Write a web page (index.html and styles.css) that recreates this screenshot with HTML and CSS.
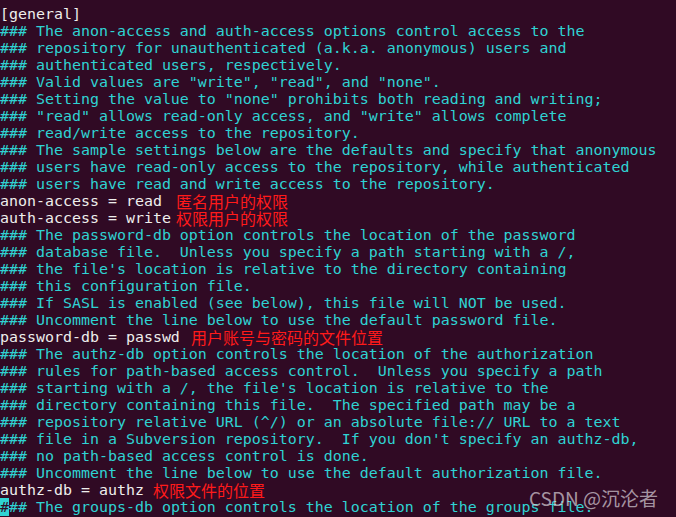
FILE: index.html
```html
<!DOCTYPE html>
<html lang="zh-CN">
<head>
<meta charset="utf-8">
<title>svnserve.conf</title>
<link rel="stylesheet" href="styles.css">
</head>
<body>
<main class="terminal">
<div class="line plain">[general]</div>
<div class="line cm">### The anon-access and auth-access options control access to the</div>
<div class="line cm">### repository for unauthenticated (a.k.a. anonymous) users and</div>
<div class="line cm">### authenticated users, respectively.</div>
<div class="line cm">### Valid values are "write", "read", and "none".</div>
<div class="line cm">### Setting the value to "none" prohibits both reading and writing;</div>
<div class="line cm">### "read" allows read-only access, and "write" allows complete</div>
<div class="line cm">### read/write access to the repository.</div>
<div class="line cm">### The sample settings below are the defaults and specify that anonymous</div>
<div class="line cm">### users have read-only access to the repository, while authenticated</div>
<div class="line cm">### users have read and write access to the repository.</div>
<div class="line plain">anon-access = read<span class="note note-a">匿名用户的权限</span></div>
<div class="line plain">auth-access = write<span class="note note-b">权限用户的权限</span></div>
<div class="line cm">### The password-db option controls the location of the password</div>
<div class="line cm">### database file.  Unless you specify a path starting with a /,</div>
<div class="line cm">### the file's location is relative to the directory containing</div>
<div class="line cm">### this configuration file.</div>
<div class="line cm">### If SASL is enabled (see below), this file will NOT be used.</div>
<div class="line cm">### Uncomment the line below to use the default password file.</div>
<div class="line plain">password-db = passwd<span class="note note-c">用户账号与密码的文件位置</span></div>
<div class="line cm">### The authz-db option controls the location of the authorization</div>
<div class="line cm">### rules for path-based access control.  Unless you specify a path</div>
<div class="line cm">### starting with a /, the file's location is relative to the</div>
<div class="line cm">### directory containing this file.  The specified path may be a</div>
<div class="line cm">### repository relative URL (^/) or an absolute file:// URL to a text</div>
<div class="line cm">### file in a Subversion repository.  If you don't specify an authz-db,</div>
<div class="line cm">### no path-based access control is done.</div>
<div class="line cm">### Uncomment the line below to use the default authorization file.</div>
<div class="line plain">authz-db = authz<span class="note note-d">权限文件的位置</span></div>
<div class="line cm"><span class="cursor">#</span>## The groups-db option controls the location of the groups file.</div>
</main>
<div class="watermark">CSDN @沉沦者</div>
</body>
</html>
```
FILE: styles.css
```css
html, body {
  margin: 0;
  padding: 0;
  background: #300a24;
  height: 100%;
  overflow: hidden;
}
.terminal {
  padding: 6px 0 0 0;
  font-family: "DejaVu Sans Mono", monospace;
  font-size: 14.95px;
  line-height: 17px;
}
.line {
  height: 17px;
  white-space: pre;
}
.plain { color: #eeeeec; }
.cm { color: #2fd3d3; }
.cursor {
  background: #2fd3d3;
  color: #300a24;
}
.note {
  font-family: "Noto Sans CJK SC", sans-serif;
  font-size: 16px;
  line-height: 16px;
  color: #ff1a1a;
  vertical-align: top;
  display: inline-block;
  height: 16px;
  overflow: visible;
}
.note-a { margin-left: 14px; }
.note-b { margin-left: 5px; }
.note-c { margin-left: 11px; }
.note-d { margin-left: 9px; }
.watermark {
  position: absolute;
  right: 18px;
  bottom: 9px;
  font-family: "Noto Sans CJK SC", sans-serif;
  font-size: 19px;
  line-height: 20px;
  color: rgba(225, 220, 225, 0.68);
}
```
